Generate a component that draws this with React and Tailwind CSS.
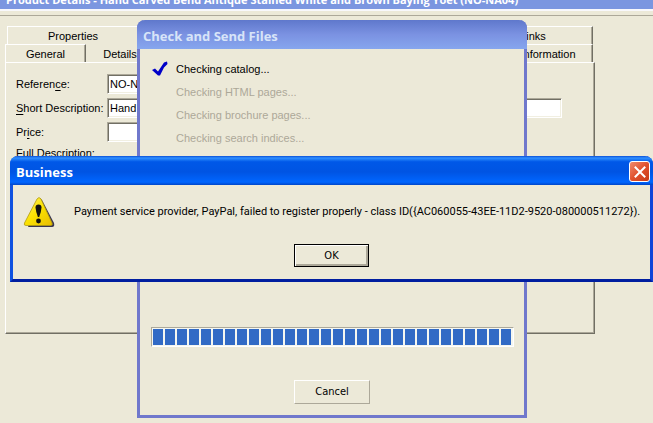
import { useState } from 'react';

const steps = [
  { label: 'Checking catalog...', done: true },
  { label: 'Checking HTML pages...', done: false },
  { label: 'Checking brochure pages...', done: false },
  { label: 'Checking search indices...', done: false },
  { label: 'Transferring files...', done: false },
];

const blocks = Array.from({ length: 30 }, (_, i) => i);

const CheckMark = () => (
  <svg viewBox="0 0 16 15" className="h-4 w-4" aria-hidden="true">
    <path d="M0 8.5 L3 7 L6 10 L12 1 L15 0 L15.5 2.5 L12 6 L8 14 L6 14 Z" fill="#0000c8" />
  </svg>
);

const WarningIcon = () => (
  <svg viewBox="0 0 32 32" className="h-8 w-8 shrink-0" aria-hidden="true">
    <defs>
      <linearGradient id="warn" x1="0" y1="0" x2="1" y2="1">
        <stop offset="0" stopColor="#fff36a" />
        <stop offset="0.5" stopColor="#fbe100" />
        <stop offset="1" stopColor="#e8bc00" />
      </linearGradient>
    </defs>
    <path d="M17 2 L19 4 L31 27 Q32 31 29 31 L5 31 Z" fill="#3a3550" />
    <path d="M14 3 Q16 0 18 3 L29 27 Q30 29.5 27.5 29.5 L3 29.5 Q0.5 29.5 1.5 27 Z" fill="url(#warn)" stroke="#b09a10" strokeWidth="0.8" />
    <path d="M12.5 11.5 Q12.5 8.5 15.5 8.5 Q18.5 8.5 18.5 11.5 Q18.2 16 16.2 21 L14.9 21 Q12.9 16 12.5 11.5 Z" fill="#111" />
    <circle cx="15.5" cy="25" r="2.4" fill="#111" />
  </svg>
);

const Field = ({ id, label, hotkey, value, wide }) => {
  const at = label.indexOf(hotkey);
  return (
    <div className="flex h-5 items-center">
      <label htmlFor={id} className="w-[91px] shrink-0 whitespace-nowrap">
        {label.slice(0, at)}<u className="underline-offset-2">{hotkey}</u>{label.slice(at + 1)}
      </label>
      <input
        id={id}
        type="text"
        defaultValue={value}
        className={`h-5 border border-t-[#aca899] border-l-[#aca899] border-r-white border-b-white bg-white px-0.5 shadow-[inset_1px_1px_0_#716f64,inset_-1px_-1px_0_#f1efe2] outline-none ${wide ? 'min-w-0 flex-1' : 'w-24'}`}
      />
    </div>
  );
};

const tab = 'border-t border-l border-r border-t-white border-l-white border-r-[#716f64] text-center shadow-[inset_-1px_0_0_#aca899]';

const ProductDetails = () => (
  <div>
    <header className="flex h-[9px] items-end overflow-hidden bg-[#7b96e0] px-1.5 pb-[3px]">
      <h1 className="font-['Open_Sans',sans-serif] text-[11px] leading-3 font-bold whitespace-nowrap text-white">
        Product Details - Hand Carved Bend Antique Stained White and Brown Baying Yoet (NO-NA04)
      </h1>
    </header>
    <div className="h-[7px] border-t-2 border-b border-t-[#f8f8fc] border-b-[#aca899]" />

    <main className="mt-[10px] mr-[58px] ml-[5px]">
      <div role="tablist" className="mx-0.5">
        <div className="flex h-[18px] justify-between">
          <button role="tab" className={`${tab} w-[132px]`}>Properties</button>
          <button role="tab" className={`${tab} w-[120px]`}>Links</button>
        </div>
        <div className="flex h-[18px] justify-between">
          <div className="flex">
            <button role="tab" aria-selected="true" className={`${tab} -ml-0.5 w-[81px]`}>General</button>
            <button role="tab" className="w-[68px] pt-0.5">Details</button>
          </div>
          <button role="tab" className={`${tab} w-[90px]`}>Information</button>
        </div>
      </div>
      <section className="flex h-[272px] flex-col gap-1 border border-t-white border-l-white border-r-[#716f64] border-b-[#716f64] py-[11px] pr-8 pl-[10px] shadow-[inset_-1px_-1px_0_#aca899]">
        <Field id="reference" label="Reference:" hotkey="c" value="NO-NA04" />
        <Field id="short" label="Short Description:" hotkey="S" value="Hand Carved" wide />
        <Field id="price" label="Price:" hotkey="i" value="" />
        <p><u className="underline-offset-2">F</u>ull Description:</p>
      </section>
    </main>
  </div>
);

const CheckDialog = () => (
  <div role="dialog" aria-labelledby="check-title" className="absolute top-5 left-[137px] flex h-[398px] w-[390px] flex-col rounded-t-lg border-[3px] border-t-0 border-[#7078cc] bg-[#ece9d8]">
    <header className="-mx-[3px] flex h-[29px] shrink-0 items-center rounded-t-lg bg-linear-to-b from-[#5f78cc] via-[#7b92e2] to-[#86a6ee] px-1.5 pt-0.5">
      <h2 id="check-title" className="font-['Open_Sans',sans-serif] text-[13px] font-bold text-[#d8e4f8]">Check and Send Files</h2>
    </header>
    <ul className="flex flex-col gap-1 px-3 pt-[10px]">
      {steps.map((s) => (
        <li key={s.label} className={`flex h-[19px] items-center ${s.done ? 'text-black' : 'text-[#aca899]'}`}>
          <span className="w-6">{s.done && <CheckMark />}</span>
          {s.label}
        </li>
      ))}
    </ul>
    <div className="mt-auto flex flex-col items-center gap-[33px] pb-[11px]">
      <div role="progressbar" aria-valuenow={100} className="flex h-5 w-[363px] gap-0.5 border border-t-[#aca899] border-l-[#aca899] border-r-white border-b-white bg-[#f4f6f0] p-px">
        {blocks.map((b) => <span key={b} className="w-[10px] bg-[#316ac5]" />)}
      </div>
      <button className="h-6 w-[76px] border border-t-white border-l-white border-r-[#aca899] border-b-[#aca899] font-['DejaVu_Sans_Condensed',sans-serif]">Cancel</button>
    </div>
  </div>
);

const MessageBox = ({ onClose }) => (
  <div role="alertdialog" aria-labelledby="msg-title" className="absolute top-[156px] right-0 left-[10px] rounded-t-lg border-[3px] border-t-0 border-[#0831c9] border-b-[#001ea0] border-r-[#1044d8] border-l-[#0f52e0] bg-[#ece9d8]">
    <header className="-mx-[3px] flex h-[29px] items-center justify-between rounded-t-lg bg-[linear-gradient(to_bottom,#0a50d8_0%,#3090ff_7%,#0058e8_20%,#0054e3_55%,#0066ff_90%,#0046c8_100%)] pt-0.5 pr-[3px] pl-1.5">
      <h2 id="msg-title" className="font-['Open_Sans',sans-serif] text-[13px] font-bold text-white">Business</h2>
      <button aria-label="Close" onClick={onClose} className="flex h-[21px] w-[21px] items-center justify-center rounded-[3px] border border-white bg-linear-to-br from-[#f08a6c] via-[#e0502c] to-[#c83a14]">
        <svg viewBox="0 0 12 12" className="h-3 w-3" aria-hidden="true">
          <path d="M1.5 1.5 L10.5 10.5 M10.5 1.5 L1.5 10.5" stroke="#fff" strokeWidth="2" strokeLinecap="square" />
        </svg>
      </button>
    </header>
    <div className="flex items-center gap-[19px] pt-[11px] pl-[10px]">
      <WarningIcon />
      <p className="font-['Roboto',sans-serif] whitespace-nowrap">
        Payment service provider, PayPal, failed to register properly - class ID({'{'}AC060055-43EE-11D2-9520-080000511272{'}'}).
      </p>
    </div>
    <div className="flex justify-center pt-4 pb-3">
      <button onClick={onClose} className="h-[23px] w-[75px] border border-black font-['DejaVu_Sans_Condensed',sans-serif] shadow-[inset_1px_1px_0_#fff,inset_-2px_-2px_0_#aca899]">OK</button>
    </div>
  </div>
);

export default function App() {
  const [open, setOpen] = useState(true);

  return (
    <div className="relative min-h-screen overflow-hidden bg-[#ece9d8] font-['Liberation_Sans',Arial,sans-serif] text-[11px] leading-[14px] text-black">
      <ProductDetails />
      <CheckDialog />
      {open && <MessageBox onClose={() => setOpen(false)} />}
    </div>
  );
}
